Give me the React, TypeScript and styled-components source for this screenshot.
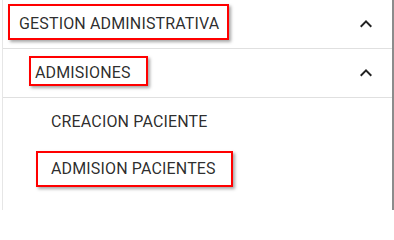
import React from "react";
import styled, { createGlobalStyle } from "styled-components";

const Global = createGlobalStyle`
  html, body { margin: 0; padding: 0; background: #ffffff; }
  body { font-family: Roboto, "Liberation Sans", Arial, sans-serif; }
`;

const Panel = styled.nav`
  box-sizing: border-box;
  margin-left: 2px;
  width: 392px;
  height: 210px;
  background: #ffffff;
  border-left: 1px solid #e6e6e6;
  border-right: 2px solid #8c8c8c;
  display: flex;
  flex-direction: column;
`;

const Row = styled.div<{ $indent: number; $h: number; $divider?: boolean }>`
  box-sizing: border-box;
  height: ${(p) => p.$h}px;
  display: flex;
  align-items: center;
  justify-content: space-between;
  padding: 0 14px 0 ${(p) => p.$indent}px;
  border-bottom: ${(p) => (p.$divider ? "1px solid #e0e0e0" : "none")};
`;

const Label = styled.span<{ $t: number; $r: number; $b: number; $l: number }>`
  position: relative;
  font-size: 16px;
  line-height: 24px;
  color: rgba(0, 0, 0, 0.84);
  letter-spacing: 0.15px;
  white-space: nowrap;

  &::after {
    content: "";
    position: absolute;
    top: ${(p) => p.$t}px;
    right: ${(p) => p.$r}px;
    bottom: ${(p) => p.$b}px;
    left: ${(p) => p.$l}px;
    border: 2px solid #ff0000;
    box-shadow: 2px 2px 3px rgba(0, 0, 0, 0.35);
    pointer-events: none;
  }
`;

const PlainLabel = styled.span`
  font-size: 16px;
  line-height: 24px;
  color: rgba(0, 0, 0, 0.84);
  letter-spacing: 0.15px;
  white-space: nowrap;
`;

const Icon = styled.svg`
  width: 24px;
  height: 24px;
  fill: rgba(0, 0, 0, 0.87);
  flex: none;
`;

const ExpandLess = () => (
  <Icon viewBox="0 0 24 24" aria-hidden="true">
    <path d="M12 8l-6 6 1.41 1.41L12 10.83l4.59 4.58L18 14z" />
  </Icon>
);

export default function App() {
  return (
    <>
      <Global />
      <Panel>
        <Row $indent={16} $h={49} $divider>
          <Label $t={-8} $r={-10} $b={-4} $l={-11}>GESTION ADMINISTRATIVA</Label>
          <ExpandLess />
        </Row>
        <Row $indent={32} $h={49} $divider>
          <Label $t={-5} $r={-17} $b={-1} $l={-6}>ADMISIONES</Label>
          <ExpandLess />
        </Row>
        <Row $indent={48} $h={47}>
          <PlainLabel>CREACION PACIENTE</PlainLabel>
        </Row>
        <Row $indent={48} $h={48}>
          <Label $t={-6} $r={-17} $b={-6} $l={-15}>ADMISION PACIENTES</Label>
        </Row>
      </Panel>
    </>
  );
}
